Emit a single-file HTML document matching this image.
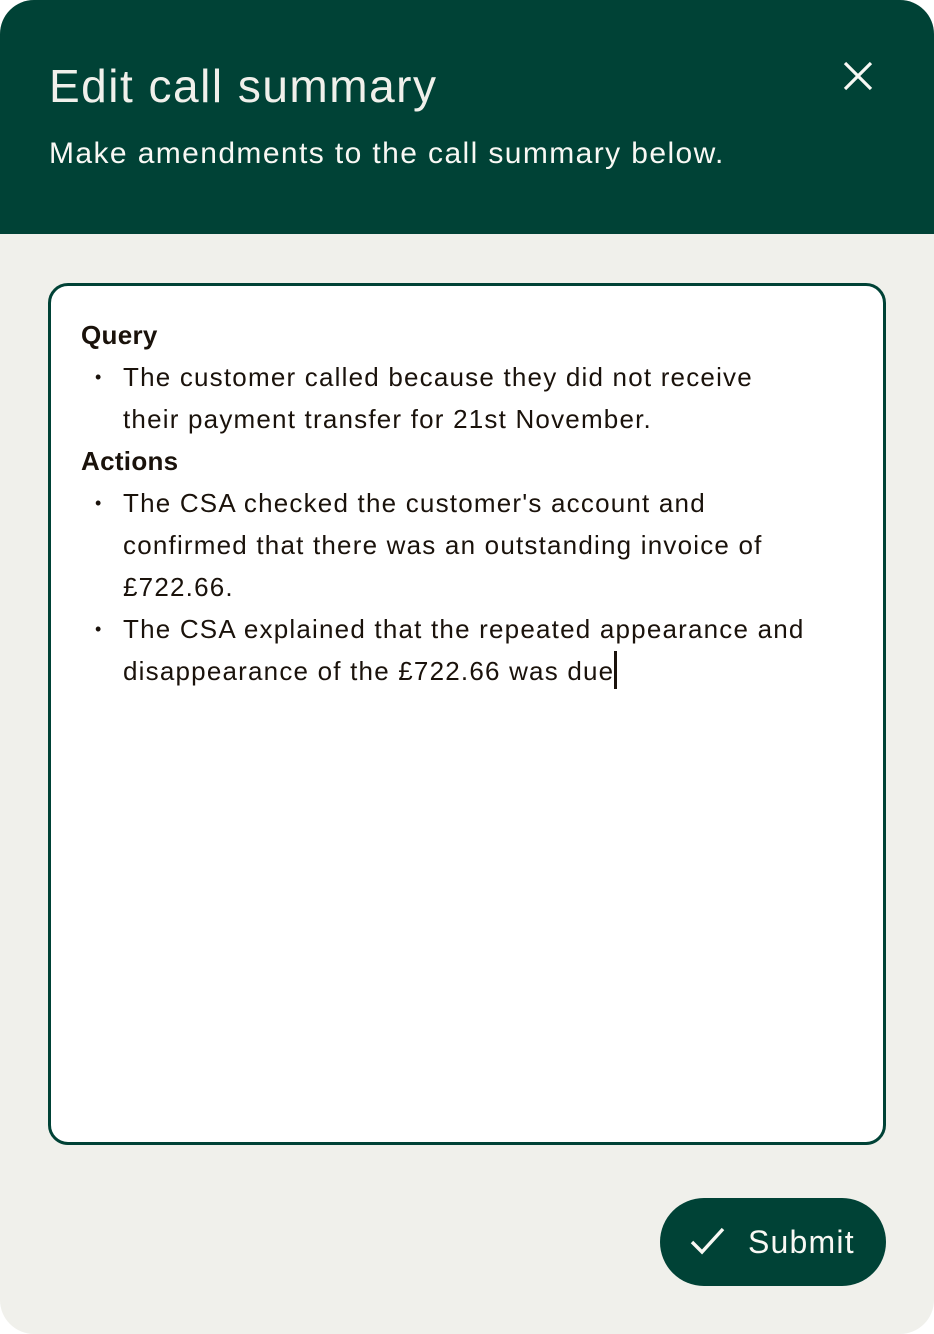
<!DOCTYPE html>
<html><head><meta charset="utf-8"><style>
html,body{margin:0;padding:0;}
body{width:934px;height:1334px;background:#fff;font-family:"Liberation Sans",sans-serif;overflow:hidden;}
.card{position:absolute;left:0;top:0;width:934px;height:1334px;background:#f0f0eb;border-radius:34px;overflow:hidden;}
.hdr{position:absolute;left:0;top:0;width:934px;height:234px;background:#004236;}
.title{position:absolute;left:49px;top:58px;font-size:46px;color:#f0f0eb;line-height:56px;letter-spacing:1.5px;}
.sub{position:absolute;left:49px;top:136px;font-size:30px;color:#f8f8f4;line-height:36px;letter-spacing:1.4px;}
.box{position:absolute;left:48px;top:283px;width:832px;height:856px;border:3px solid #004236;border-radius:20px;background:#fff;}
.txt{position:absolute;left:30px;top:28px;font-size:26px;line-height:42px;color:#1a120b;white-space:nowrap;letter-spacing:1.2px;}
.txt b{display:block;letter-spacing:0.3px;}
.li{position:relative;padding-left:42px;}
.li:before{content:"•";position:absolute;left:14px;font-size:18px;}
.caret{display:inline-block;width:3px;height:38px;background:#1a120b;vertical-align:-9px;}
.btn{position:absolute;left:660px;top:1198px;width:226px;height:88px;border-radius:44px;background:#004236;color:#f8f8f4;font-size:32px;letter-spacing:1.2px;}
.btn span{position:absolute;left:88px;top:26px;line-height:36px;}
</style></head><body>
<div class="card">
<div class="hdr">
<div class="title">Edit call summary</div>
<div class="sub">Make amendments to the call summary below.</div>
<svg style="position:absolute;left:842px;top:60px" width="32" height="32" viewBox="0 0 32 32"><path d="M3 3L29 29M29 3L3 29" stroke="#f8f8f4" stroke-width="3.2" fill="none"/></svg>
</div>
<div class="box"><div class="txt">
<b>Query</b>
<div class="li">The customer called because they did not receive<br>their payment transfer for 21st November.</div>
<b>Actions</b>
<div class="li">The CSA checked the customer's account and<br>confirmed that there was an outstanding invoice of<br>£722.66.</div>
<div class="li">The CSA explained that the repeated appearance and<br>disappearance of the £722.66 was due<span class="caret"></span></div>
</div></div>
<div class="btn">
<svg style="position:absolute;left:30px;top:28px" width="36" height="30" viewBox="0 0 36 30"><path d="M2 16L12 26L33 3" stroke="#f8f8f4" stroke-width="3.4" fill="none"/></svg>
<span>Submit</span></div>
</div>
</body></html>
